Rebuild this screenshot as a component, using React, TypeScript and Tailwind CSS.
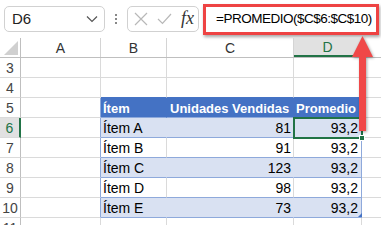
import React from "react";

const GRID = "border-[#dadada]";
const cols = ["w-[80px]", "w-[66px]", "w-[127px]", "w-[68px]", "flex-1"];

type Row = {
  n: number;
  kind: "empty" | "head" | "band" | "plain";
  b?: string;
  c?: string;
  d?: string;
};

const rows: Row[] = [
  { n: 3, kind: "empty" },
  { n: 4, kind: "empty" },
  { n: 5, kind: "head", b: "Ítem", c: "Unidades Vendidas", d: "Promedio" },
  { n: 6, kind: "band", b: "Ítem A", c: "81", d: "93,2" },
  { n: 7, kind: "plain", b: "Ítem B", c: "91", d: "93,2" },
  { n: 8, kind: "band", b: "Ítem C", c: "123", d: "93,2" },
  { n: 9, kind: "plain", b: "Ítem D", c: "98", d: "93,2" },
  { n: 10, kind: "band", b: "Ítem E", c: "73", d: "93,2" },
  { n: 11, kind: "empty" },
];

function SheetRow({ row }: { row: Row }) {
  const inTable = row.kind !== "empty";
  const selected = row.n === 6;
  const above = row.n === 4;

  const fill =
    row.kind === "head" ? "bg-[#4472C4]" : row.kind === "band" ? "bg-[#D9E1F2]" : "bg-white";
  const bottom = inTable ? "border-b-[#8EA9DB]" : above ? "border-b-[#4472C4]" : "border-b-[#dadada]";
  const inner =
    row.kind === "head"
      ? "border-r-[#4472C4]"
      : row.kind === "band"
        ? "border-r-[#D9E1F2]"
        : "border-r-[#dadada]";
  const text =
    row.kind === "head"
      ? "text-white font-bold text-[13px]"
      : "text-black text-[14px]";

  return (
    <div className="flex h-[20px]">
      <div
        className={`w-[21px] shrink-0 border-b border-b-[#dadada] text-[14px] leading-[20px] text-center ${
          selected
            ? "bg-[#e1e1e1] border-r-2 border-r-[#217346] text-[#217346]"
            : "bg-white border-r border-r-[#bfbfbf] text-[#444]"
        }`}
      >
        {row.n}
      </div>
      <div
        className={`${cols[0]} shrink-0 border-b border-r ${GRID} ${inTable ? "border-r-[#8EA9DB]" : ""}`}
      />
      <div
        className={`${cols[1]} shrink-0 border-b border-r ${GRID} ${inTable ? `${fill} ${bottom} ${inner}` : above ? bottom : ""} ${text} leading-[21px] pl-[2px] whitespace-nowrap`}
      >
        {row.b}
      </div>
      <div
        className={`${cols[2]} shrink-0 border-b border-r ${GRID} ${inTable ? `${fill} ${bottom} ${inner}` : above ? bottom : ""} ${text} leading-[21px] whitespace-nowrap ${
          row.kind === "head" ? "pl-[3px]" : "text-right pr-[2px]"
        }`}
      >
        {row.c}
      </div>
      <div
        className={`${cols[3]} shrink-0 border-b border-r ${GRID} ${inTable ? `${fill} ${bottom} border-r-[#8EA9DB]` : above ? bottom : ""} ${text} leading-[21px] whitespace-nowrap ${
          row.kind === "head" ? "pl-[2px]" : "text-right pr-[3px]"
        }`}
      >
        {row.d}
      </div>
      <div className={`${cols[4]} border-b ${GRID}`} />
    </div>
  );
}

export default function App() {
  return (
    <div
      className="relative w-[381px] h-[225px] overflow-hidden bg-white"
      style={{ fontFamily: '"Liberation Sans", Arial, sans-serif' }}
    >
      {/* Formula bar */}
      <div className="flex items-center h-[38px]">
        <div className="ml-[4px] w-[101px] h-[26px] border border-[#d1d1d1] rounded-[5px] flex items-center justify-between pl-[7px] pr-[6px]">
          <span className="text-[15px] text-[#222]">D6</span>
          <svg width="12" height="8" viewBox="0 0 12 8">
            <path d="M1 1.5 L6 6.5 L11 1.5" fill="none" stroke="#555" strokeWidth="1.2" />
          </svg>
        </div>
        <div className="w-[22px] flex flex-col items-center gap-[2px]">
          <span className="w-[2px] h-[2px] bg-[#888]" />
          <span className="w-[2px] h-[2px] bg-[#888]" />
          <span className="w-[2px] h-[2px] bg-[#888]" />
        </div>
        <div className="w-[72px] h-[26px] border border-[#d1d1d1] rounded-[5px] flex items-center pl-[6px] gap-[9px]">
          <svg width="14" height="14" viewBox="0 0 14 14">
            <path d="M1 1 L13 13 M13 1 L1 13" stroke="#b8b8b8" strokeWidth="1.2" />
          </svg>
          <svg width="15" height="12" viewBox="0 0 15 12">
            <path d="M1 6 L5.5 10.5 L14 1" fill="none" stroke="#b8b8b8" strokeWidth="1.2" />
          </svg>
          <span
            className="italic text-[18px] text-[#333] leading-none -mt-[2px]"
            style={{ fontFamily: '"Liberation Serif", "Times New Roman", serif' }}
          >
            fx
          </span>
        </div>
        <div className="ml-[4px] w-[176px] h-[31px] border-[3px] border-[#ee4343] bg-white shadow-[1px_2px_3px_rgba(0,0,0,0.35)] flex items-center pl-[10px]">
          <span className="text-[13.5px] text-black tracking-[-0.5px] whitespace-nowrap">
            =PROMEDIO($C$6:$C$10)
          </span>
        </div>
      </div>

      {/* Column headers */}
      <div className="flex h-[20px] border-b border-b-[#bfbfbf]">
        <div className="relative w-[21px] shrink-0 border-r border-r-[#bfbfbf]">
          <div className="absolute right-[2px] bottom-[2px] w-0 h-0 border-l-[14px] border-l-transparent border-b-[14px] border-b-[#d0d0d0]" />
        </div>
        {["A", "B", "C"].map((l, i) => (
          <div
            key={l}
            className={`${cols[i]} shrink-0 border-r border-r-[#d4d4d4] text-center text-[14px] leading-[20px] text-[#333]`}
          >
            {l}
          </div>
        ))}
        <div className="w-[68px] shrink-0 bg-[#e1e1e1] border-b-2 border-b-[#217346] border-r border-r-[#d4d4d4] text-center text-[14px] leading-[19px] text-[#217346]">
          D
        </div>
        <div className="flex-1" />
      </div>

      {rows.map((r) => (
        <SheetRow key={r.n} row={r} />
      ))}

      {/* Active cell D6 */}
      <div className="absolute left-[293px] top-[117px] w-[70px] h-[22px] border-2 border-[#217346]" />
      <div className="absolute left-[359px] top-[135px] w-[6px] h-[6px] bg-[#217346] border border-white" />
      {/* Table resize handle */}
      <div className="absolute left-[358px] top-[213px] w-0 h-0 border-l-[4px] border-l-transparent border-b-[4px] border-b-[#4472C4]" />

      {/* Red arrow */}
      <svg
        className="absolute left-[350px] top-[34px]"
        width="26"
        height="100"
        viewBox="0 0 26 100"
        style={{ filter: "drop-shadow(1px 1px 1.5px rgba(0,0,0,0.35))" }}
      >
        <path d="M12.5 2 L23 23 L16 23 L16 97 L9 97 L9 23 L2 23 Z" fill="#f04848" />
      </svg>
    </div>
  );
}
